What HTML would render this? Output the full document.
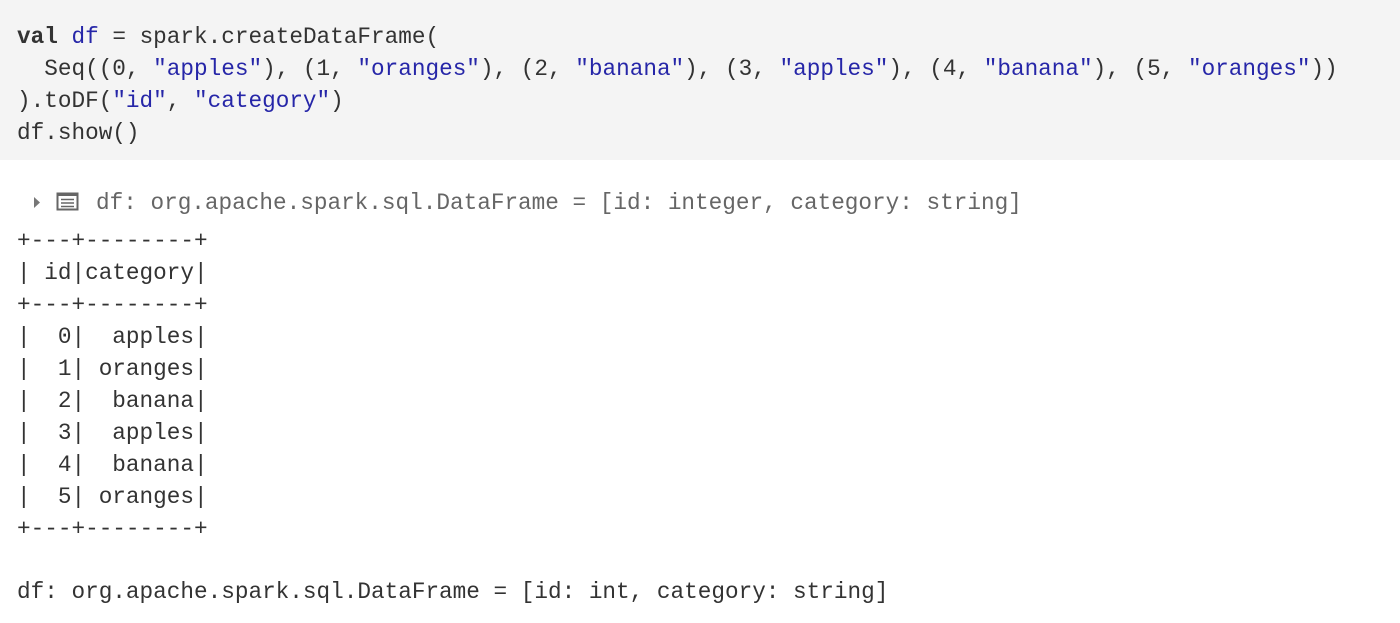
<!DOCTYPE html>
<html><head><meta charset="utf-8"><style>
body{margin:0;width:1400px;height:623px;background:#fff;overflow:hidden;font-family:"Liberation Mono",monospace;font-size:22.7px;}
.code{background:#f4f4f4;height:160px;box-sizing:border-box;padding-top:21px;padding-left:17px;color:#333;}
.l{height:32px;line-height:32px;white-space:pre;}
.s{color:#2626a8}
.b{font-weight:bold;color:#333}
.out{position:absolute;left:17px;top:225px;color:#333}
.hdr{position:absolute;left:96px;top:187px;color:#666;white-space:pre;line-height:32px;}
.last{position:absolute;left:17px;top:576px;color:#333;white-space:pre;line-height:32px;}
</style></head><body>
<div class="code">
<div class="l"><span class="b">val</span> <span class="s">df</span> = spark.createDataFrame(</div>
<div class="l">  Seq((0, <span class="s">"apples"</span>), (1, <span class="s">"oranges"</span>), (2, <span class="s">"banana"</span>), (3, <span class="s">"apples"</span>), (4, <span class="s">"banana"</span>), (5, <span class="s">"oranges"</span>))</div>
<div class="l">).toDF(<span class="s">"id"</span>, <span class="s">"category"</span>)</div>
<div class="l">df.show()</div>
</div>
<svg style="position:absolute;left:30px;top:190px" width="52" height="24">
<polygon points="4,7 10,12.5 4,18" fill="#777"/>
<rect x="27.5" y="3.5" width="20" height="16" fill="none" stroke="#666" stroke-width="2"/>
<rect x="27" y="3" width="21" height="3" fill="#666"/>
<line x1="31" y1="9.5" x2="44" y2="9.5" stroke="#666" stroke-width="1.5"/>
<line x1="31" y1="13" x2="44" y2="13" stroke="#666" stroke-width="1.5"/>
<line x1="31" y1="16.5" x2="44" y2="16.5" stroke="#666" stroke-width="1.5"/>
</svg>
<div class="hdr">df: org.apache.spark.sql.DataFrame = [id: integer, category: string]</div>
<div class="out">
<div class="l">+---+--------+</div>
<div class="l">| id|category|</div>
<div class="l">+---+--------+</div>
<div class="l">|  0|  apples|</div>
<div class="l">|  1| oranges|</div>
<div class="l">|  2|  banana|</div>
<div class="l">|  3|  apples|</div>
<div class="l">|  4|  banana|</div>
<div class="l">|  5| oranges|</div>
<div class="l">+---+--------+</div>
</div>
<div class="last">df: org.apache.spark.sql.DataFrame = [id: int, category: string]</div>
</body></html>
